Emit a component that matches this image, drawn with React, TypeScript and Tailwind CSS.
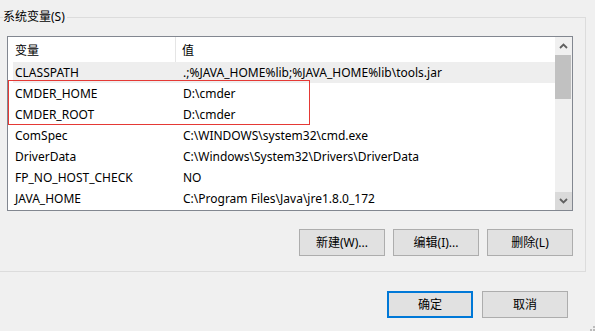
import React from "react";

const rows: [string, string][] = [
  ["CLASSPATH", ".;%JAVA_HOME%lib;%JAVA_HOME%lib\\tools.jar"],
  ["CMDER_HOME", "D:\\cmder"],
  ["CMDER_ROOT", "D:\\cmder"],
  ["ComSpec", "C:\\WINDOWS\\system32\\cmd.exe"],
  ["DriverData", "C:\\Windows\\System32\\Drivers\\DriverData"],
  ["FP_NO_HOST_CHECK", "NO"],
  ["JAVA_HOME", "C:\\Program Files\\Java\\jre1.8.0_172"],
];

function Btn({ label, primary }: { label: string; primary?: boolean }) {
  return (
    <div
      className={
        "w-[86px] h-[27px] flex items-center justify-center bg-[#e1e1e1] text-[12px] text-black " +
        (primary ? "border-2 border-[#0078d7]" : "border border-[#adadad]")
      }
    >
      {label}
    </div>
  );
}

export default function App() {
  return (
    <div
      className="relative w-[595px] h-[331px] overflow-hidden bg-[#f0f0f0] text-black text-[12px] leading-[16px]"
      style={{ fontFamily: '"Noto Sans", "Noto Sans CJK SC", sans-serif' }}
    >
      <fieldset className="ml-[-6px] mt-[9px] w-[592px] border border-[#dcdcdc] pb-[15px]">
        <legend className="ml-[8px] pr-[2px] leading-[16px]">系统变量(S)</legend>
        <div className="relative ml-[12px] mt-[11px] w-[566px] h-[175px] border border-[#828790] bg-white flex">
          <div className="flex-1 flex flex-col">
            <div className="h-[25px] flex items-stretch">
              <div className="w-[168px] pl-[7px] pt-[2px] flex items-center border-r border-[#e5e5e5]">变量</div>
              <div className="pl-[6px] pt-[2px] flex items-center">值</div>
            </div>
            {rows.map(([k, v], i) => (
              <div
                key={k}
                className={
                  "h-[21px] ml-[5px] flex items-center " + (i === 0 ? "bg-[#eeeeee]" : "")
                }
              >
                <div className="w-[170px] pl-[2px] whitespace-nowrap">{k}</div>
                <div className="whitespace-nowrap">{v}</div>
              </div>
            ))}
          </div>
          <div className="w-[17px] bg-[#f0f0f0] flex flex-col">
            <div className="h-[18px] flex items-center justify-center">
              <svg width="9" height="6" viewBox="0 0 9 6">
                <path d="M1 5 L4.5 1.5 L8 5" stroke="#606060" strokeWidth="1.8" fill="none" />
              </svg>
            </div>
            <div className="h-[44px] mr-[1px] bg-[#c1c1c1]" />
            <div className="flex-1" />
            <div className="h-[18px] bg-[#dadada] flex items-center justify-center">
              <svg width="9" height="6" viewBox="0 0 9 6">
                <path d="M1 1 L4.5 4.5 L8 1" stroke="#606060" strokeWidth="1.8" fill="none" />
              </svg>
            </div>
          </div>
          <div className="absolute left-0 top-[43px] w-[302px] h-[45px] border border-[#e53935]" />
        </div>
        <div className="ml-[12px] mt-[18px] w-[566px] flex justify-end gap-[8px]">
          <Btn label="新建(W)..." />
          <Btn label="编辑(I)..." />
          <Btn label="删除(L)" />
        </div>
      </fieldset>
      <div className="mt-[19px] w-[568px] flex justify-end gap-[9px]">
        <Btn label="确定" primary />
        <Btn label="取消" />
      </div>
      <div className="absolute right-0 bottom-0 w-[6px] h-[6px]">
        <div className="absolute right-[0px] bottom-[0px] w-[2px] h-[2px] bg-[#bcbcbc]" />
        <div className="absolute right-[3px] bottom-[0px] w-[2px] h-[2px] bg-[#bcbcbc]" />
        <div className="absolute right-[0px] bottom-[3px] w-[2px] h-[2px] bg-[#bcbcbc]" />
      </div>
    </div>
  );
}
